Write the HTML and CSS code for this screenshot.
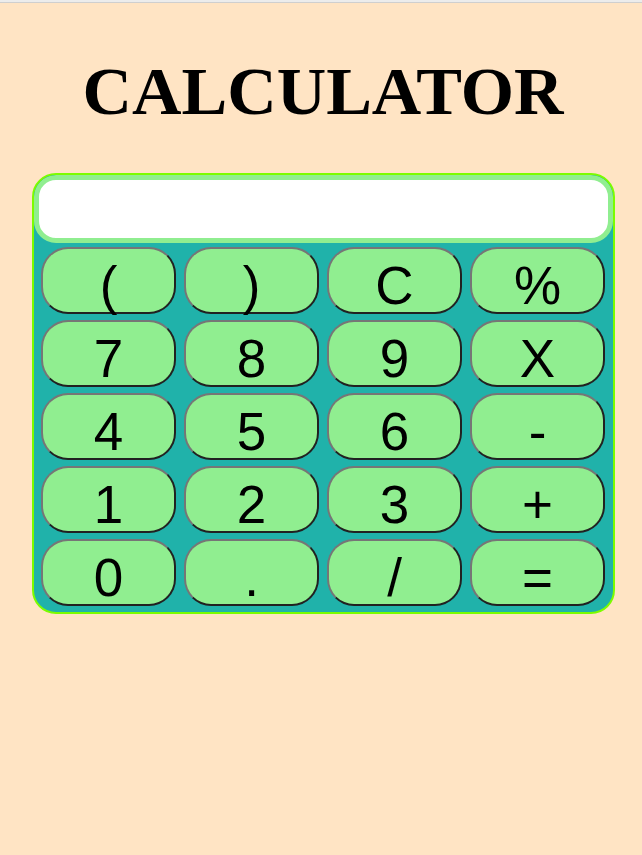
FILE: index.html
```html
<!DOCTYPE html>
<html>
<head>
<meta charset="utf-8">
<link rel="stylesheet" href="styles.css">
</head>
<body>
<div class="topline"></div>
<h1 class="title">CALCULATOR</h1>
<div class="calc">
  <div class="display"></div>
  <div class="keys">
    <button class="key">(</button>
    <button class="key">)</button>
    <button class="key">C</button>
    <button class="key">%</button>
    <button class="key">7</button>
    <button class="key">8</button>
    <button class="key">9</button>
    <button class="key">X</button>
    <button class="key">4</button>
    <button class="key">5</button>
    <button class="key">6</button>
    <button class="key">-</button>
    <button class="key">1</button>
    <button class="key">2</button>
    <button class="key">3</button>
    <button class="key">+</button>
    <button class="key">0</button>
    <button class="key">.</button>
    <button class="key">/</button>
    <button class="key">=</button>
  </div>
</div>
</body>
</html>
```
FILE: styles.css
```css
html, body {
  margin: 0;
  padding: 0;
  background: #ffe4c4;
}
body {
  width: 642px;
  height: 855px;
  overflow: hidden;
}
.topline {
  height: 3px;
  background: linear-gradient(#ececec 0, #ececec 2px, #cfcfcf 2px, #cfcfcf 3px);
}
.title {
  font-family: "Liberation Serif", "Times New Roman", serif;
  font-weight: bold;
  font-size: 68.5px;
  line-height: 80px;
  text-align: center;
  margin: 48px 0 0 4px;
  color: #000;
}
.calc {
  box-sizing: border-box;
  width: 583px;
  margin: 42px 0 0 32px;
  border: 2px solid #7cfc00;
  border-radius: 24px;
  background: #20b2aa;
  overflow: hidden;
}
.display {
  height: 58px;
  background: #fff;
  border: 5px solid #90ee90;
  border-radius: 22px;
}
.keys {
  display: grid;
  grid-template-columns: repeat(4, 135px);
  grid-template-rows: repeat(5, 67px);
  column-gap: 8px;
  row-gap: 6px;
  padding: 4px 6px 6px 7px;
}
.key {
  margin: 0;
  padding: 9px 0 0;
  background: #90ee90;
  border: 2px outset #767676;
  border-radius: 27px;
  font-family: "Liberation Sans", Arial, sans-serif;
  font-size: 53px;
  line-height: 1;
  color: #000;
}
```
